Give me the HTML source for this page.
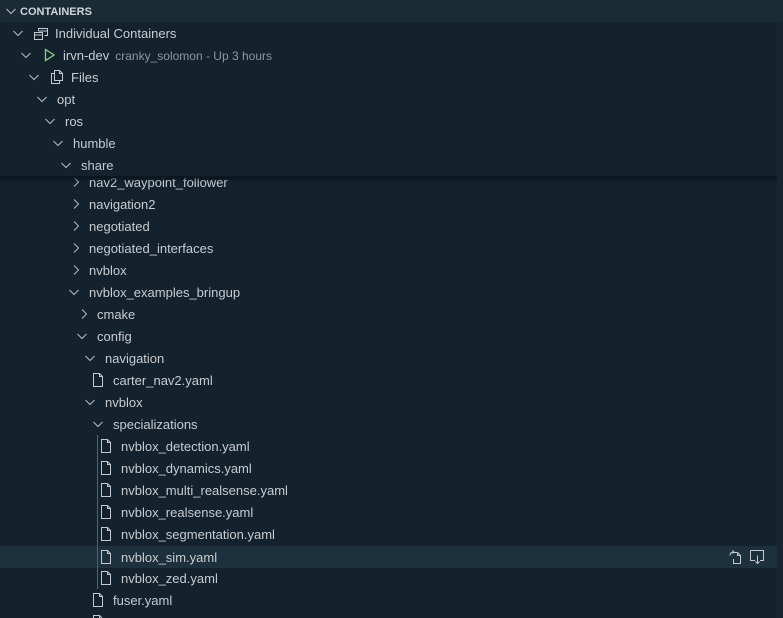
<!DOCTYPE html>
<html style="width:783px;height:618px;overflow:hidden"><head><meta charset="utf-8"><style>
*{margin:0;padding:0;box-sizing:border-box}
body{width:783px;height:618px;overflow:hidden;background:#13222d;font-family:"Liberation Sans","DejaVu Sans",sans-serif;color:#c8ccd0;font-size:13px;position:relative}
.r{position:absolute;left:0;width:777px;height:22px;line-height:22px;white-space:nowrap}
.t{position:absolute;top:1px}
.c{position:absolute;top:3px;width:16px;height:16px}
.i{position:absolute;top:3px;width:16px;height:16px}
.hdr{position:absolute;left:0;top:0;width:783px;height:22px;background:#1b2b36;line-height:22px;font-size:11px;font-weight:bold;color:#d0d4d8}
.sticky{position:absolute;left:0;top:22px;width:783px;height:155px;background:#13222d;box-shadow:0 2px 3px #0a141b;border-bottom:1px solid #0c1820}
.desc{color:#8d979f;font-size:12px;margin-left:6px}
.sel{background:#1d303d}
.guide{position:absolute;left:97px;top:435px;width:1px;height:154px;background:#55636d}
</style></head><body>
<svg width="0" height="0" style="position:absolute"><defs>
<symbol id="d" viewBox="0 0 16 16"><path d="M3.5 6 L8 10.5 L12.5 6" fill="none" stroke="#b8bdc2" stroke-width="1"/></symbol>
<symbol id="rt" viewBox="0 0 16 16"><path d="M6 3.5 L10.5 8 L6 12.5" fill="none" stroke="#b8bdc2" stroke-width="1"/></symbol>
<symbol id="f" viewBox="0 0 16 16"><path d="M3.5 1.5 H9.5 L12.5 4.5 V14.5 H3.5 Z M9.5 1.5 V4.5 H12.5" fill="none" stroke="#c5c9cd" stroke-width="1"/></symbol>
</defs></svg>

<div class="r" style="top:171px"><svg class="c" style="left:68px"><use href="#rt"/></svg><span class="t" style="left:89px">nav2_waypoint_follower</span></div>
<div class="r" style="top:193px"><svg class="c" style="left:68px"><use href="#rt"/></svg><span class="t" style="left:89px">navigation2</span></div>
<div class="r" style="top:215px"><svg class="c" style="left:68px"><use href="#rt"/></svg><span class="t" style="left:89px">negotiated</span></div>
<div class="r" style="top:237px"><svg class="c" style="left:68px"><use href="#rt"/></svg><span class="t" style="left:89px">negotiated_interfaces</span></div>
<div class="r" style="top:259px"><svg class="c" style="left:68px"><use href="#rt"/></svg><span class="t" style="left:89px">nvblox</span></div>
<div class="r" style="top:281px"><svg class="c" style="left:66px"><use href="#d"/></svg><span class="t" style="left:89px">nvblox_examples_bringup</span></div>
<div class="r" style="top:303px"><svg class="c" style="left:76px"><use href="#rt"/></svg><span class="t" style="left:97px">cmake</span></div>
<div class="r" style="top:325px"><svg class="c" style="left:74px"><use href="#d"/></svg><span class="t" style="left:97px">config</span></div>
<div class="r" style="top:347px"><svg class="c" style="left:82px"><use href="#d"/></svg><span class="t" style="left:105px">navigation</span></div>
<div class="r" style="top:369px"><svg class="i" style="left:90px"><use href="#f"/></svg><span class="t" style="left:113px">carter_nav2.yaml</span></div>
<div class="r" style="top:391px"><svg class="c" style="left:82px"><use href="#d"/></svg><span class="t" style="left:105px">nvblox</span></div>
<div class="r" style="top:413px"><svg class="c" style="left:90px"><use href="#d"/></svg><span class="t" style="left:113px">specializations</span></div>
<div class="r" style="top:435px"><svg class="i" style="left:98px"><use href="#f"/></svg><span class="t" style="left:121px">nvblox_detection.yaml</span></div>
<div class="r" style="top:457px"><svg class="i" style="left:98px"><use href="#f"/></svg><span class="t" style="left:121px">nvblox_dynamics.yaml</span></div>
<div class="r" style="top:479px"><svg class="i" style="left:98px"><use href="#f"/></svg><span class="t" style="left:121px">nvblox_multi_realsense.yaml</span></div>
<div class="r" style="top:501px"><svg class="i" style="left:98px"><use href="#f"/></svg><span class="t" style="left:121px">nvblox_realsense.yaml</span></div>
<div class="r" style="top:523px"><svg class="i" style="left:98px"><use href="#f"/></svg><span class="t" style="left:121px">nvblox_segmentation.yaml</span></div>
<div class="r sel" style="top:546px"><svg class="i" style="left:98px"><use href="#f"/></svg><span class="t" style="left:121px">nvblox_sim.yaml</span>
<svg style="position:absolute;left:728px;top:3px" width="18" height="16" viewBox="0 0 18 16"><path d="M5.5 3.5 H9.5 L12.5 6.5 V14.5 H5.5 V10 M9.5 3.5 V6.5 H12.5 M2 6.5 C2 4 3.5 3 6 3 M4.5 1.5 L6 3 L4.5 4.5" fill="none" stroke="#c5c9cd" stroke-width="1"/></svg>
<svg style="position:absolute;left:749px;top:3px" width="18" height="16" viewBox="0 0 18 16"><path d="M1.5 1.5 H14.5 V11.5 H11 M6 11.5 H1.5 V1.5 M8.5 6.5 V14.5 M6.5 12.5 L8.5 14.5 L10.5 12.5" fill="none" stroke="#c5c9cd" stroke-width="1"/></svg></div>
<div class="r" style="top:567px"><svg class="i" style="left:98px"><use href="#f"/></svg><span class="t" style="left:121px">nvblox_zed.yaml</span></div>
<div class="r" style="top:589px"><svg class="i" style="left:90px"><use href="#f"/></svg><span class="t" style="left:113px">fuser.yaml</span></div>
<div class="r" style="top:611px;height:7px;overflow:hidden"><svg class="i" style="left:90px"><use href="#f"/></svg></div>
<div class="guide"></div>

<div class="sticky">
<div class="r" style="top:0px"><svg class="c" style="left:10px"><use href="#d"/></svg>
<svg class="i" style="left:33px" viewBox="0 0 16 16"><path d="M1.5 7.5 H9.5 V14.5 H1.5 Z M1.5 10 H9.5 M5.5 5.5 V3.5 H14.5 V10.5 H11.5 M5.5 6 H14.5" fill="none" stroke="#c5c9cd" stroke-width="1"/></svg>
<span class="t" style="left:55px">Individual Containers</span></div>
<div class="r" style="top:22px"><svg class="c" style="left:18px"><use href="#d"/></svg>
<svg class="i" style="left:41px" viewBox="0 0 16 16"><path d="M4.5 2.5 L13 8 L4.5 13.5 Z" fill="none" stroke="#89d185" stroke-width="1.3"/></svg>
<span class="t" style="left:63px">irvn-dev<span class="desc">cranky_solomon - Up 3 hours</span></span></div>
<div class="r" style="top:44px"><svg class="c" style="left:26px"><use href="#d"/></svg>
<svg class="i" style="left:49px" viewBox="0 0 16 16"><path d="M5.5 1.5 H10.5 L13.5 4.5 V11.5 H5.5 Z M10.5 1.5 V4.5 H13.5 M5.5 4.5 H2.5 V14.5 H10.5 V11.5" fill="none" stroke="#c5c9cd" stroke-width="1"/></svg>
<span class="t" style="left:71px">Files</span></div>
<div class="r" style="top:66px"><svg class="c" style="left:34px"><use href="#d"/></svg><span class="t" style="left:57px">opt</span></div>
<div class="r" style="top:88px"><svg class="c" style="left:42px"><use href="#d"/></svg><span class="t" style="left:65px">ros</span></div>
<div class="r" style="top:110px"><svg class="c" style="left:50px"><use href="#d"/></svg><span class="t" style="left:73px">humble</span></div>
<div class="r" style="top:132px"><svg class="c" style="left:58px"><use href="#d"/></svg><span class="t" style="left:81px">share</span></div>
</div>

<div class="hdr"><svg style="position:absolute;left:3px;top:3px" width="16" height="16"><use href="#d"/></svg><span style="position:absolute;left:20px;top:1px">CONTAINERS</span></div>
<div style="position:absolute;left:777px;top:22px;width:6px;height:596px;background:#16252f"></div>
</body></html>
